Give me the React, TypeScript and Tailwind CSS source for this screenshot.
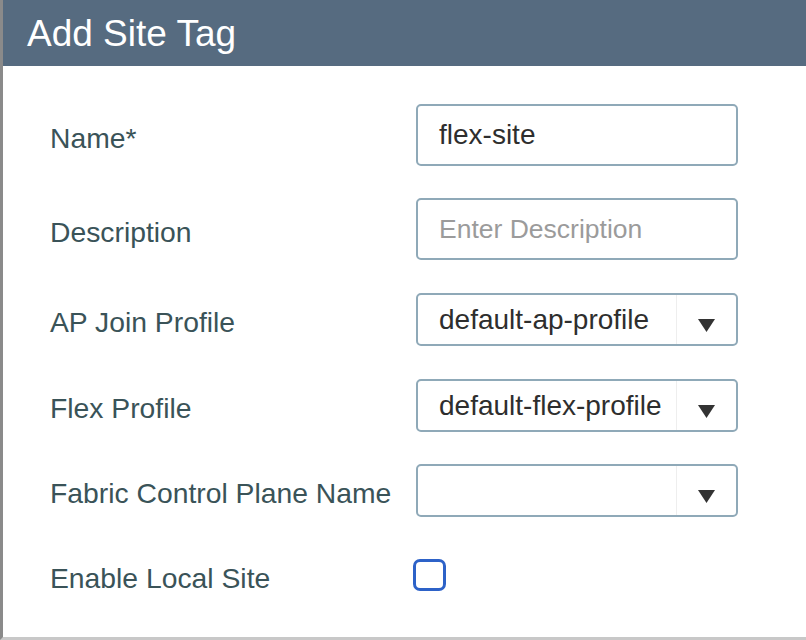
import React from "react";

function Label({ text }: { text: string }) {
  return (
    <div className="w-[366px] shrink-0 pt-[6px] text-[28.3px] leading-none text-[#3a5358]">
      {text}
    </div>
  );
}

function Select({ value }: { value: string }) {
  return (
    <div className="flex h-[53px] w-[322px] items-stretch rounded-[5px] border-2 border-[#8fa9b8] bg-white">
      <div className="flex flex-1 items-center pl-[21px] text-[28px] leading-none text-[#2e2e2e]">
        {value}
      </div>
      <div className="flex w-[60px] items-center justify-center border-l border-[#eeeeee] pt-[11px]">
        <svg width="17" height="13" viewBox="0 0 17 13">
          <path d="M0 0 H17 L8.5 13 Z" fill="#333333" />
        </svg>
      </div>
    </div>
  );
}

export default function App() {
  return (
    <div className="flex h-[640px] w-[806px] flex-col border-b-[3px] border-l-[3px] border-b-[#c8c8c8] border-l-[#8a8a8a] bg-white font-['Liberation_Sans',Arial,sans-serif]">
      {/* Header */}
      <div className="flex h-[66px] shrink-0 items-center bg-[#566b80] pl-[24px] text-[37px] leading-none text-white">
        Add Site Tag
      </div>

      {/* Form */}
      <div className="flex flex-col pl-[47px] pt-[38px]">
        <div className="flex h-[62px] items-center">
          <Label text="Name*" />
          <div className="flex h-[62px] w-[322px] items-center rounded-[5px] border-2 border-[#8fa9b8] pl-[21px] text-[28px] leading-none text-[#2e2e2e]">
            flex-site
          </div>
        </div>

        <div className="mt-[32px] flex h-[62px] items-center">
          <Label text="Description" />
          <div className="flex h-[62px] w-[322px] items-center rounded-[5px] border-2 border-[#8fa9b8] pl-[21px] text-[26.5px] leading-none text-[#9b9b9b]">
            Enter Description
          </div>
        </div>

        <div className="mt-[33px] flex h-[53px] items-center">
          <Label text="AP Join Profile" />
          <Select value="default-ap-profile" />
        </div>

        <div className="mt-[33px] flex h-[53px] items-center">
          <Label text="Flex Profile" />
          <Select value="default-flex-profile" />
        </div>

        <div className="mt-[32px] flex h-[53px] items-center">
          <Label text="Fabric Control Plane Name" />
          <Select value="" />
        </div>

        <div className="mt-[42px] flex h-[32px] items-center">
          <Label text="Enable Local Site" />
          <div className="-ml-[3px] h-[32px] w-[33px] rounded-[7px] border-[3px] border-[#2d62c8] bg-white" />
        </div>
      </div>
    </div>
  );
}
